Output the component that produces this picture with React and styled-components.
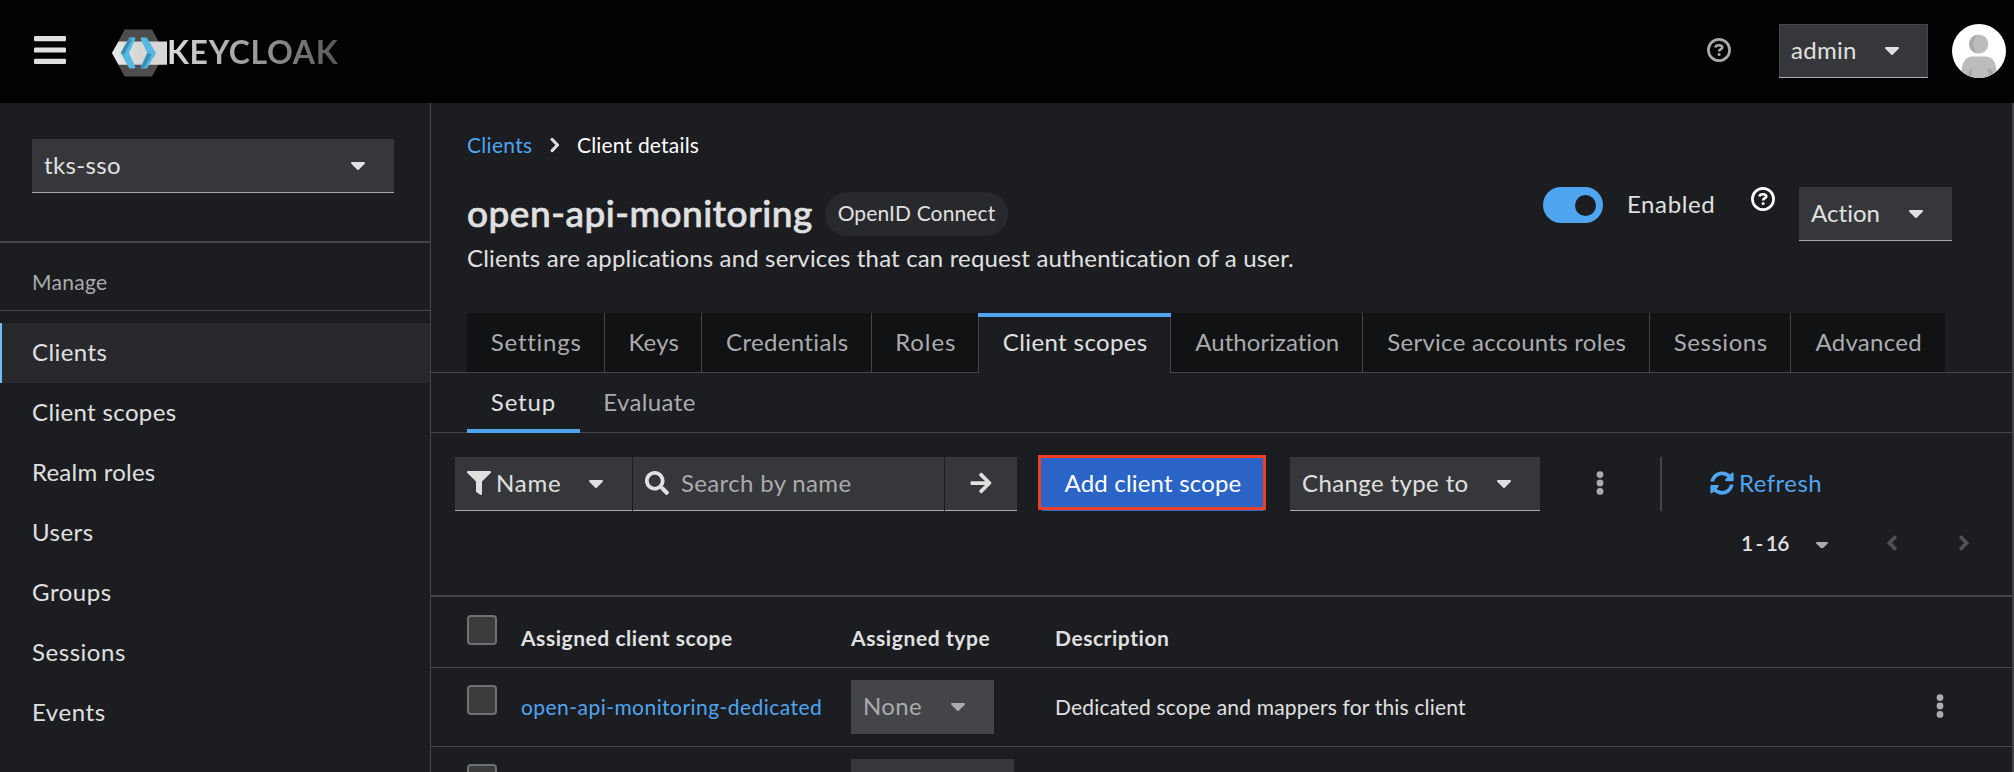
import React from 'react';
import styled, { createGlobalStyle, css } from 'styled-components';
import { FaFilter, FaSearch, FaArrowRight, FaSyncAlt, FaAngleLeft, FaAngleRight } from 'react-icons/fa';

const c = {
  bg: '#1c1d21',
  line: '#444548',
  control: '#36373a',
  text: '#e0e0e0',
  muted: '#aaabac',
  link: '#4fa5f0',
};

const Global = createGlobalStyle`
  * { box-sizing: border-box; }
  body {
    margin: 0;
    overflow: hidden;
    background: ${c.bg};
    color: ${c.text};
    font: 24px/30px Lato, "Open Sans", sans-serif;
  }
  svg { display: block; flex: none; }
`;

const Page = styled.div`
  width: 2014px;
  height: 772px;
  display: flex;
  flex-direction: column;
  overflow: hidden;
`;

const T = styled.span`
  white-space: pre;
  font-variant-ligatures: none;
  letter-spacing: ${(p) => p.$ls || 0}px;
`;

/* Masthead */
const Masthead = styled.header`
  height: 103px;
  flex: none;
  display: flex;
  align-items: center;
  padding: 0 8px 1px 34px;
  background: #020202;
`;
const BarsSlot = styled.div`
  padding-bottom: 2px;
`;
const Brand = styled.div`
  display: flex;
  align-items: center;
  margin-left: 46px;
  padding-top: 3px;
`;
const Wordmark = styled.span`
  font: 700 32px/40px Lato, sans-serif;
  letter-spacing: 0.65px;
  margin-left: -1px;
  margin-top: 1px;
  padding-bottom: 2px;
  color: transparent;
  background: linear-gradient(90deg, #dedede 0%, #b4b4b4 30%, #8a8a8a 65%, #565656 100%);
  background-clip: text;
  -webkit-background-clip: text;
`;
const MastheadTools = styled.div`
  margin-left: auto;
  display: flex;
  align-items: center;
`;

const Toggle = styled.button`
  display: flex;
  align-items: center;
  justify-content: space-between;
  width: ${(p) => p.$w}px;
  height: 54px;
  flex: none;
  padding: 0 ${(p) => p.$pr || 29}px 2px 12px;
  border: 0;
  border-bottom: 1px solid ${(p) => (p.$disabled ? '#444548' : '#aaabac')};
  background: ${(p) => (p.$disabled ? '#444548' : c.control)};
  color: ${(p) => (p.$disabled ? c.muted : c.text)};
  font: inherit;
  ${(p) => p.$outlined && css`box-shadow: inset 1px 1px #444548, inset -1px 0 #444548; `}
`;
const HelpSlot = styled.div`
  display: flex;
  margin: ${(p) => p.$m};
`;
const AvatarSlot = styled.div`
  margin-left: 24px;
`;

/* Body */
const Body = styled.div`
  flex: 1;
  min-height: 0;
  display: flex;
`;
const Sidebar = styled.nav`
  width: 431px;
  flex: none;
  border-right: 1px solid ${c.line};
`;
const RealmBox = styled.div`
  height: 140px;
  padding: 36px 0 0 32px;
  border-bottom: 2px solid ${c.line};
`;
const NavTitle = styled.div`
  height: 68px;
  padding: 24px 0 0 32px;
  border-bottom: 1px solid ${c.line};
  font-size: 21px;
  color: ${c.muted};
`;
const NavList = styled.div`
  padding-top: 12px;
`;
const NavItem = styled.div`
  height: 60px;
  display: flex;
  align-items: center;
  padding: 0 0 2px 32px;
  ${(p) => p.$active && css`
    background: #28292d;
    box-shadow: inset 2px 0 #73bcf7;
  `}
`;

const Main = styled.main`
  flex: 1;
  min-width: 0;
  border-right: 2px solid #3f4043;
  display: flex;
  flex-direction: column;
`;
const Intro = styled.section`
  height: 210px;
  flex: none;
  display: flex;
  justify-content: space-between;
  padding: 27px 60px 0 36px;
`;
const Crumbs = styled.div`
  display: flex;
  align-items: center;
  height: 30px;
  font-size: 21px;
`;
const CrumbSep = styled.span`
  margin: 0 17px 0 17.5px;
`;
const LinkText = styled(T)`
  color: ${c.link};
`;
const CurrentCrumb = styled(T)`
  color: #fff;
`;
const TitleRow = styled.div`
  display: flex;
  align-items: center;
  height: 44px;
  margin-top: 32px;
`;
const Title = styled.h1`
  margin: 0;
  padding-bottom: 2px;
  width: 358px;
  font: 500 37px/42px Lato, sans-serif;
  letter-spacing: 0.5px;
  -webkit-text-stroke: 0.7px ${c.text};
  white-space: nowrap;
`;
const Badge = styled.span`
  height: 44px;
  width: 183px;
  border-radius: 22px;
  display: flex;
  align-items: center;
  justify-content: center;
  padding-bottom: 3px;
  background: #28292d;
  font-size: 21px;
`;
const Subtitle = styled.p`
  margin: 7px 0 0;
`;
const IntroActions = styled.div`
  display: flex;
  align-items: flex-start;
  padding-top: 57px;
`;
const Switch = styled.div`
  width: 60px;
  height: 36px;
  border-radius: 18px;
  background: ${c.link};
  display: flex;
  align-items: center;
  justify-content: flex-end;
  padding-right: 7px;
  padding-top: 1px;
`;
const Knob = styled.div`
  width: 21px;
  height: 21px;
  border-radius: 50%;
  background: ${c.bg};
`;
const SwitchLabel = styled.span`
  width: 122px;
  margin-left: 24px;
  padding-top: 2px;
`;

const TabStrip = styled.div`
  height: 60px;
  flex: none;
  display: flex;
  padding-left: 36px;
  box-shadow: inset 0 -1px ${c.line};
`;
const Tab = styled.div`
  width: ${(p) => p.$w}px;
  display: flex;
  align-items: center;
  justify-content: center;
  color: ${c.muted};
  background: #111214;
  border-bottom: 1px solid ${c.line};
  border-right: ${(p) => (p.$edge ? 0 : 1)}px solid ${c.line};
  padding: 0 0 1px 1.5px;
  ${(p) => p.$active && css`
    color: ${c.text};
    background: ${c.bg};
    border-bottom: 0;
    border-right: 0;
    padding-bottom: 2px;
    box-shadow: inset 0 4px ${c.link}, inset 1px 0 ${c.line}, inset -1px 0 ${c.line};
  `}
`;
const SubTab = styled.div`
  width: ${(p) => p.$w}px;
  display: flex;
  align-items: center;
  justify-content: center;
  padding-bottom: 2px;
  color: ${(p) => (p.$active ? c.text : c.muted)};
  ${(p) => p.$active && css`box-shadow: inset 0 -4px ${c.link};`}
`;

const Toolbar = styled.div`
  display: flex;
  align-items: center;
  height: 54px;
  flex: none;
  margin-top: 24px;
  padding-left: 24px;
`;
const SearchGroup = styled.div`
  display: flex;
  gap: 1px;
`;
const FilterLabel = styled.span`
  display: flex;
  align-items: center;
  gap: 5px;
`;
const SearchField = styled.div`
  width: 311px;
  height: 54px;
  display: flex;
  align-items: center;
  gap: 12px;
  padding: 0 0 2px 12px;
  background: ${c.control};
  border-bottom: 1px solid #aaabac;
  color: ${c.muted};
  svg { color: ${c.text}; }
`;
const SearchSubmit = styled.button`
  width: 72px;
  height: 54px;
  display: flex;
  align-items: center;
  justify-content: center;
  padding: 0 1px 2px 0;
  border: 0;
  border-bottom: 1px solid #aaabac;
  background: ${c.control};
  color: ${c.text};
`;
const PrimaryButton = styled.button`
  position: relative;
  width: 226px;
  height: 54px;
  margin: 0 24px 0 23px;
  padding: 0 0 3px;
  border: 0;
  border-radius: 4px;
  background: #2a64c7;
  color: #fff;
  font: inherit;
`;
const Highlight = styled.span`
  position: absolute;
  inset: -2px 0 1px -2px;
  border: 3px solid #ee4024;
`;
const ToolbarKebab = styled.span`
  margin: 0 57px;
  padding-bottom: 2px;
  width: 6px;
  display: flex;
  justify-content: center;
`;
const Divider = styled.span`
  width: 2px;
  height: 54px;
  background: ${c.line};
`;
const Refresh = styled.span`
  display: flex;
  align-items: center;
  gap: 5px;
  margin-left: 48px;
  padding-bottom: 3px;
  color: ${c.link};
`;

const Pager = styled.div`
  display: flex;
  align-items: center;
  justify-content: flex-end;
  height: 64px;
  flex: none;
  padding-right: 44px;
  color: ${c.muted};
`;
const PagerRange = styled(T)`
  color: ${c.text};
  font: 600 21px/30px Lato, sans-serif;
  word-spacing: -1px;
  width: 48px;
`;
const PagerCaret = styled.span`
  margin: 2px 52px 0 27px;
`;
const PagerArrow = styled.span`
  color: #505154;
  width: 16px;
  margin-left: ${(p) => p.$gap || 0}px;
`;

const Table = styled.div`
  margin-top: 20px;
  border-top: 2px solid ${c.line};
`;
const Row = styled.div`
  height: ${(p) => p.$h}px;
  display: grid;
  grid-template-columns: 54px 330px 204px 1fr 76px;
  padding-left: 36px;
  border-bottom: 1px solid ${c.line};
  font-size: 21px;
  font-weight: ${(p) => (p.$head ? 700 : 400)};
`;
const Cell = styled.div`
  padding-top: ${(p) => p.$t || 0}px;
  font-size: ${(p) => p.$fs || 21}px;
`;
const Checkbox = styled.div`
  width: 30px;
  height: 30px;
  border: 2px solid #70706f;
  border-radius: 4px;
  background: #3b3b3b;
`;

const CaretSvg = styled.svg`
  margin-top: 2px;
`;
const Caret = ({ w = 14 }) => (
  <CaretSvg width={w} height={(w * 8) / 14} viewBox="0 0 14 8" fill="currentColor">
    <path d="M1 0h12a1 1 0 0 1 .7 1.7l-6 6a1 1 0 0 1-1.4 0l-6-6A1 1 0 0 1 1 0z" />
  </CaretSvg>
);
const Kebab = () => (
  <svg width="8" height="24" viewBox="0 0 8 24" fill={c.muted}>
    <circle cx="4" cy="3.6" r="3.4" />
    <circle cx="4" cy="12" r="3.4" />
    <circle cx="4" cy="20.4" r="3.4" />
  </svg>
);
const Help = ({ color }) => (
  <svg width="24" height="24" viewBox="0 0 24 24" fill="none" stroke={color}>
    <circle cx="12" cy="12" r="10.6" strokeWidth="2.7" />
    <path d="M8.4 9.4C8.7 7.8 10 7.2 12 7.2s3.3.8 3.3 2.2c0 2-3.2 1.7-3.2 4.2" strokeWidth="2.6" />
    <circle cx="12.1" cy="16.6" r="1.5" fill={color} stroke="none" />
  </svg>
);
const Bars = () => (
  <svg width="32" height="28" viewBox="0 0 32 28" fill={c.text}>
    <rect y="0" width="32" height="5.2" rx="1.2" />
    <rect y="11.4" width="32" height="5.2" rx="1.2" />
    <rect y="22.8" width="32" height="5.2" rx="1.2" />
  </svg>
);
const LogoMark = () => (
  <svg width="56" height="48" viewBox="112 28.5 56 48">
    <defs>
      <linearGradient id="band" x1="0" x2="1">
        <stop offset="0" stopColor="#e9e9e9" />
        <stop offset="0.5" stopColor="#d6d6d6" />
        <stop offset="1" stopColor="#d9d9d9" />
      </linearGradient>
    </defs>
    <path d="M124.6 29h27.4l13 23.5L152 76h-27.4L112 52.5z" fill="#4d4d4d" />
    <path d="M118.5 41H167v23.3h-48.5L112 52.6z" fill="url(#band)" />
    <path d="M129.3 37h5.6l.5 1.2-6.4 14.2 6.6 14.4-.7 1.2h-5.6l-8.6-15.6z" fill="#56b9e3" />
    <path d="M129.3 37l2.6 2.4-7.8 14.8L120.7 52.4z" fill="#3a8fb5" />
    <path d="M146.7 37h-5.6l-.6 1.2 6.9 14.2-6.7 14.4.6 1.2h5.6l9.1-15.6z" fill="#56b9e3" />
    <path d="M147.4 52.4l4.2 1-6.5 13.2-3.8 1.4-.6-1.2z" fill="#3a8fb5" />
  </svg>
);
const Avatar = () => (
  <svg width="54" height="54" viewBox="0 0 54 54">
    <defs>
      <clipPath id="round"><circle cx="27" cy="27" r="27" /></clipPath>
    </defs>
    <g clipPath="url(#round)">
      <rect width="54" height="54" fill="#fff" />
      <circle cx="26.7" cy="20" r="9.6" fill="#bcbcbc" />
      <path d="M25 10.6a9.6 9.6 0 0 0 0 18.9c-4.6-5.5-4.6-13.4 0-18.9z" fill="#a9a9a9" />
      <path d="M9.5 54v-8c1-8.500 4.500-13.500 11-13.500h13c6.500 0 10 5 11 13.500v8z" fill="#bcbcbc" />
      <path d="M16.500 54c-.8-4 .2-7.500 3.200-10v10zM34.500 44.500c4-.2 6 1 6.500 4L37 54c.4-4-.5-7.200-2.500-9.500z" fill="#a6a6a6" />
    </g>
  </svg>
);

const NAV = [
  ['Clients', 0.42], ['Client scopes', 0.35], ['Realm roles', 0.22], ['Users', 0.47],
  ['Groups', 0.54], ['Sessions', 0.54], ['Events', 0.56],
];
const TABS = [
  ['Settings', 138, 0.75], ['Keys', 97, 0.2], ['Credentials', 170, 0.34], ['Roles', 106, 0.9],
  ['Client scopes', 193, 0.38], ['Authorization', 192, 0.05], ['Service accounts roles', 287, 0.28],
  ['Sessions', 141, 0.54], ['Advanced', 154, 0.31],
];

export default function App() {
  return (
    <Page>
      <Global />
      <Masthead>
        <BarsSlot><Bars /></BarsSlot>
        <Brand>
          <LogoMark />
          <Wordmark>KEYCLOAK</Wordmark>
        </Brand>
        <MastheadTools>
          <HelpSlot $m="0 48px 2px 0"><Help color={c.muted} /></HelpSlot>
          <Toggle $w={149} $outlined><T $ls={0.3}>admin</T><Caret /></Toggle>
          <AvatarSlot><Avatar /></AvatarSlot>
        </MastheadTools>
      </Masthead>
      <Body>
        <Sidebar>
          <RealmBox>
            <Toggle $w={362}><T $ls={0.35}>tks-sso</T><Caret /></Toggle>
          </RealmBox>
          <NavTitle><T $ls={0.3}>Manage</T></NavTitle>
          <NavList>
            {NAV.map(([label, ls], i) => (
              <NavItem key={label} $active={i === 0}><T $ls={ls}>{label}</T></NavItem>
            ))}
          </NavList>
        </Sidebar>
        <Main>
          <Intro>
            <div>
              <Crumbs>
                <LinkText $ls={0.3}>Clients</LinkText>
                <CrumbSep>
                  <svg width="10" height="16" viewBox="0 0 10 16" fill="none" stroke={c.text} strokeWidth="3.2" strokeLinejoin="round" strokeLinecap="round">
                    <path d="M2.200 2.500L7.500 8l-5.300 5.500" />
                  </svg>
                </CrumbSep>
                <CurrentCrumb $ls={0.2}>Client details</CurrentCrumb>
              </Crumbs>
              <TitleRow>
                <Title>open-api-monitoring</Title>
                <Badge><T $ls={0.12}>OpenID Connect</T></Badge>
              </TitleRow>
              <Subtitle>
                <T $ls={0.15}>Clients are applications and services that can request authentication of a user.</T>
              </Subtitle>
            </div>
            <IntroActions>
              <Switch><Knob /></Switch>
              <SwitchLabel><T $ls={0.6}>Enabled</T></SwitchLabel>
              <HelpSlot $m="0 24px 0 2px"><Help color="#fff" /></HelpSlot>
              <Toggle $w={153}><T $ls={0.05}>Action</T><Caret /></Toggle>
            </IntroActions>
          </Intro>
          <TabStrip>
            {TABS.map(([label, w, ls]) => (
              <Tab key={label} $w={w} $active={label === 'Client scopes'} $edge={label === 'Roles' || label === 'Advanced'}>
                <T $ls={ls}>{label}</T>
              </Tab>
            ))}
          </TabStrip>
          <TabStrip>
            <SubTab $w={113} $active><T $ls={0.87}>Setup</T></SubTab>
            <SubTab $w={139}><T $ls={0.4}>Evaluate</T></SubTab>
          </TabStrip>
          <Toolbar>
            <SearchGroup>
              <Toggle $w={177}>
                <FilterLabel><FaFilter size={24} /><T $ls={0.8}>Name</T></FilterLabel>
                <Caret />
              </Toggle>
              <SearchField><FaSearch size={24} /><T $ls={0.35}>Search by name</T></SearchField>
              <SearchSubmit><FaArrowRight size={24} /></SearchSubmit>
            </SearchGroup>
            <PrimaryButton><T $ls={0.19}>Add client scope</T><Highlight /></PrimaryButton>
            <Toggle $w={250}><T $ls={0.38}>Change type to</T><Caret /></Toggle>
            <ToolbarKebab><Kebab /></ToolbarKebab>
            <Divider />
            <Refresh><FaSyncAlt size={24} /><T $ls={0.45}>Refresh</T></Refresh>
          </Toolbar>
          <Pager>
            <PagerRange $ls={-0.9}>1 - 16</PagerRange>
            <PagerCaret><Caret w={12} /></PagerCaret>
            <PagerArrow><FaAngleLeft size={24} /></PagerArrow>
            <PagerArrow $gap={56}><FaAngleRight size={24} /></PagerArrow>
          </Pager>
          <Table>
            <Row $h={71} $head>
              <Cell $t={18}><Checkbox /></Cell>
              <Cell $t={26}><T $ls={0.54}>Assigned client scope</T></Cell>
              <Cell $t={26}><T $ls={0.6}>Assigned type</T></Cell>
              <Cell $t={26}><T $ls={0.55}>Description</T></Cell>
            </Row>
            <Row $h={79}>
              <Cell $t={17}><Checkbox /></Cell>
              <Cell $t={24}><LinkText $ls={0.45}>open-api-monitoring-dedicated</LinkText></Cell>
              <Cell $t={12} $fs={24}><Toggle $w={143} $disabled><T $ls={0.33}>None</T><Caret /></Toggle></Cell>
              <Cell $t={24}><T $ls={0.18}>Dedicated scope and mappers for this client</T></Cell>
              <Cell $t={26}><Kebab /></Cell>
            </Row>
            <Row $h={79}>
              <Cell $t={17}><Checkbox /></Cell>
              <Cell />
              <Cell $t={12}><Toggle $w={163} /></Cell>
            </Row>
          </Table>
        </Main>
      </Body>
    </Page>
  );
}
